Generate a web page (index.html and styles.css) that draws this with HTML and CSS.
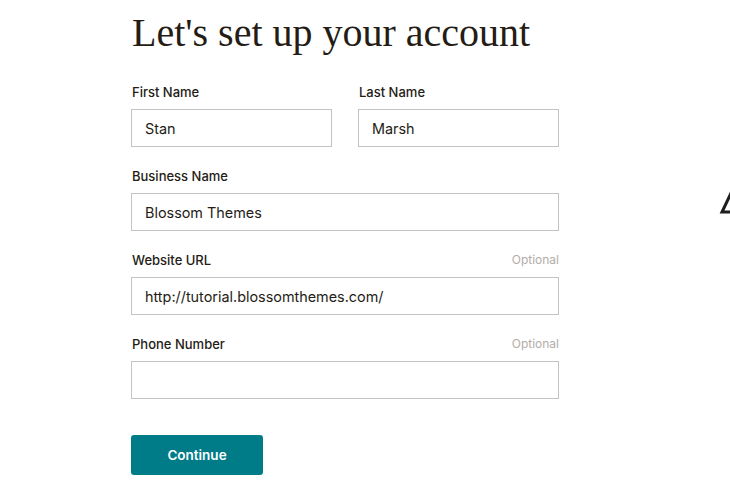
FILE: index.html
```html
<!DOCTYPE html>
<html>

<head>
    <title>Set up your account</title>
    <link rel="stylesheet" href="styles.css">
</head>

<body>
    <!-- Account setup form -->
    <div class="container">
        <h1>Let's set up your account</h1>

        <form id="setup-form" class="setup-form">
            <div class="row">
                <div class="field">
                    <label for="first-name">First Name</label>
                    <input type="text" id="first-name" name="first-name" value="Stan">
                </div>
                <div class="field">
                    <label for="last-name">Last Name</label>
                    <input type="text" id="last-name" name="last-name" value="Marsh">
                </div>
            </div>

            <div class="field">
                <label for="business">Business Name</label>
                <input type="text" id="business" name="business" value="Blossom Themes">
            </div>

            <div class="field">
                <div class="label-row">
                    <label for="website">Website URL</label>
                    <span class="optional">Optional</span>
                </div>
                <input type="text" id="website" name="website" value="http://tutorial.blossomthemes.com/">
            </div>

            <div class="field">
                <div class="label-row">
                    <label for="phone">Phone Number</label>
                    <span class="optional">Optional</span>
                </div>
                <input type="text" id="phone" name="phone">
            </div>

            <button type="submit" class="continue-btn">Continue</button>
        </form>
    </div>

    <!-- Warning icon peeking in from the right edge -->
    <svg class="edge-icon" width="30" height="30" viewBox="0 0 30 30">
        <polygon points="14.5,4 4,26 25,26" fill="none" stroke="#1e1e1e" stroke-width="3" stroke-linejoin="miter" />
    </svg>
</body>

</html>
```

FILE: styles.css
```css
html {
    overflow: hidden;
}

body {
    font-family: Inter, "Liberation Sans", sans-serif;
    background-color: #fff;
    color: #241c15;
    margin: 0;
    padding: 0;
}

.container {
    padding: 9px 0 0 131px;
}

h1 {
    font-family: "Liberation Serif", "Times New Roman", serif;
    font-weight: normal;
    font-size: 40px;
    line-height: 48px;
    margin: 0 0 0 1px;
    color: #241c15;
}

.setup-form {
    width: 428px;
    margin-top: 24px;
}

.row {
    display: flex;
    gap: 26px;
}

.row .field {
    flex: 1;
}

.field {
    margin-bottom: 18px;
}

.label-row {
    display: flex;
    justify-content: space-between;
    align-items: baseline;
}

label {
    display: block;
    font-size: 13px;
    line-height: 20px;
    font-weight: 500;
    margin-bottom: 8px;
    padding-left: 1px;
    position: relative;
    top: 1px;
}

.optional {
    font-size: 12px;
    color: #b3ada8;
}

input {
    display: block;
    box-sizing: border-box;
    width: 100%;
    height: 38px;
    padding: 0 13px;
    border: 1px solid #c3c3c3;
    border-radius: 0;
    font-family: Inter, "Liberation Sans", sans-serif;
    font-size: 14.4px;
    color: #241c15;
    background-color: #fff;
}

.continue-btn {
    display: block;
    width: 132px;
    height: 40px;
    margin-top: 36px;
    background-color: #007c89;
    color: #fff;
    border: none;
    border-radius: 3px;
    font-family: Inter, "Liberation Sans", sans-serif;
    font-size: 13.5px;
    font-weight: 600;
    cursor: pointer;
}

.continue-btn:hover {
    background-color: #006570;
}

.edge-icon {
    position: absolute;
    left: 718px;
    top: 186px;
}
```
